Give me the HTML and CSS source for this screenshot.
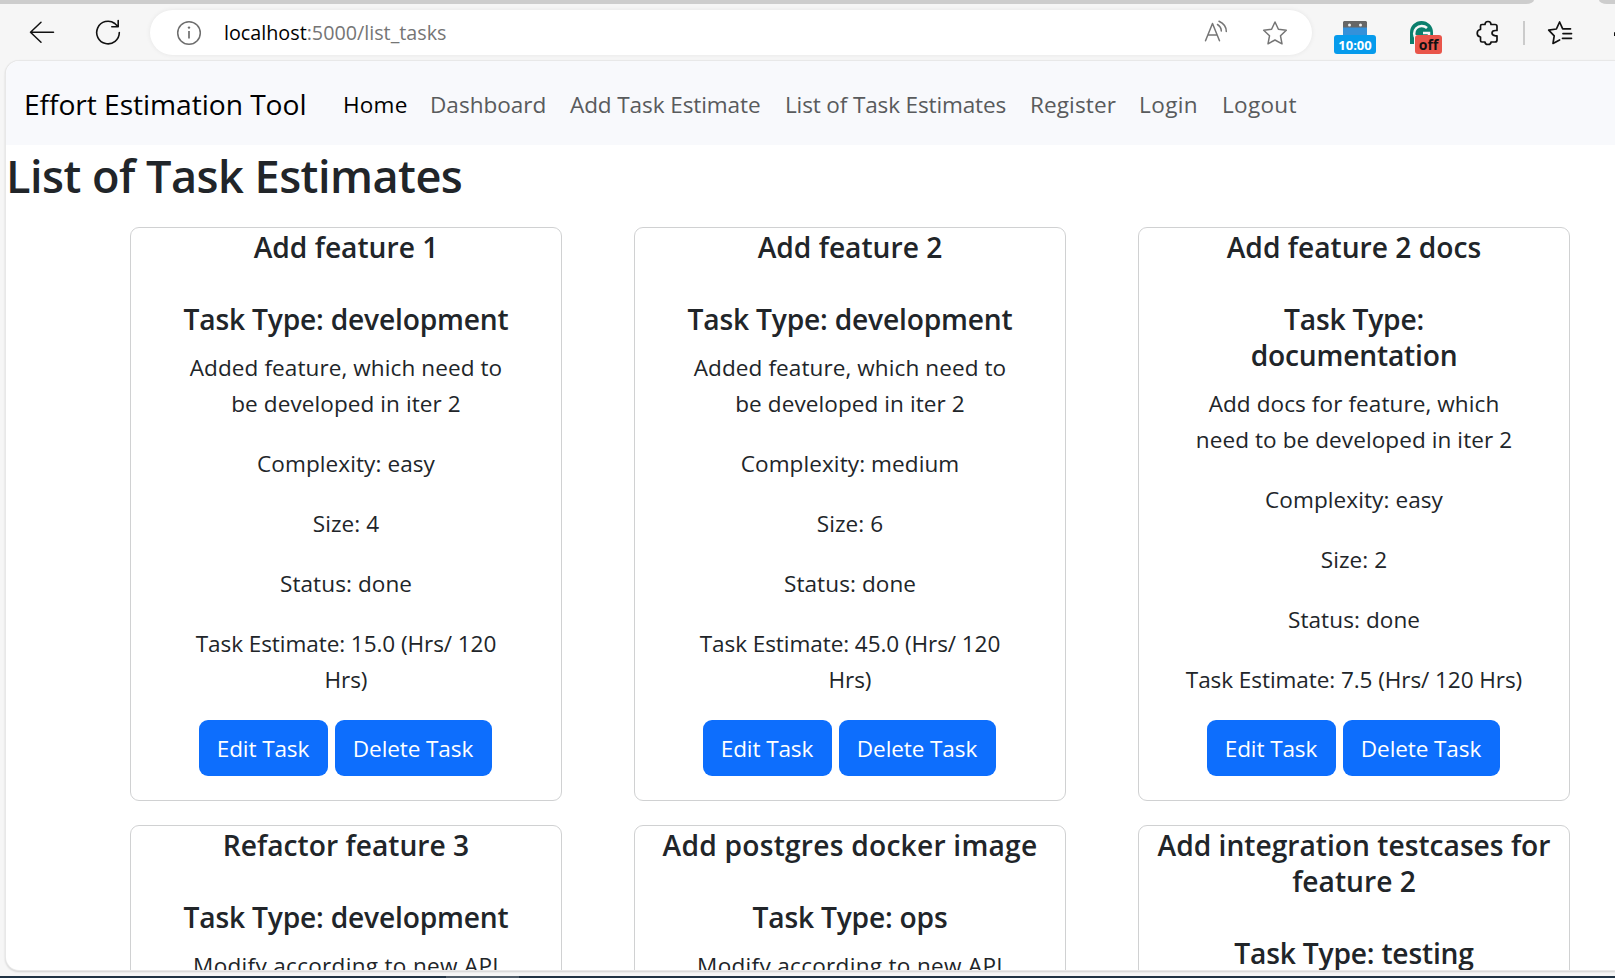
FILE: index.html
```
<!DOCTYPE html>
<html lang="en">
<head>
<meta charset="utf-8">
<title>Effort Estimation Tool</title>
<link rel="stylesheet" href="styles.css">
</head>
<body>
<div class="tabstrip"><div class="tabs-left"></div><div class="tabs-right"></div></div>
<header class="toolbar">
  <svg class="back" width="26" height="24" viewBox="0 0 26 24" fill="none" stroke="#111" stroke-width="1.5" stroke-linecap="round" stroke-linejoin="round"><path d="M24.5 12.3H1.5M12 2.3L1.5 12.3L12 22.3"/></svg>
  <svg class="reload" width="26" height="26" viewBox="0 0 26 26" fill="none" stroke="#111" stroke-width="1.6" stroke-linecap="round" stroke-linejoin="round"><path d="M24.300 13.500A11.300 11.300 0 1 1 19.800 4.500L23 7.600M23.200 1.500V7.800H16.800"/></svg>
  <div class="address">
    <svg class="info" width="26" height="26" viewBox="0 0 26 26" fill="none" stroke="#6e6e6e" stroke-width="1.5"><circle cx="13" cy="13" r="11.3"/><path d="M13 11v7.5" stroke-width="1.7"/><circle cx="13" cy="7.6" r="1.2" fill="#6e6e6e" stroke="none"/></svg>
    <span class="url"><b>localhost</b>:5000/list_tasks</span>
    <svg class="read" width="24" height="24" viewBox="0 0 24 24" fill="none" stroke="#757575" stroke-width="1.5" stroke-linecap="round" stroke-linejoin="round"><path d="M1.5 20.8L8.5 3.5L15.5 20.8M4 15H13.2M13.5 4.5Q17.3 7 17.3 11M15 1.2Q22.3 4.5 22.3 11.5"/></svg>
    <svg class="fav" width="26" height="26" viewBox="0 0 26 26" fill="none" stroke="#757575" stroke-width="1.5" stroke-linejoin="round"><path d="M13 2L16.4 9.2L24.3 10.2L18.5 15.8L20 23.8L13 20L6 23.8L7.500 15.8L1.700 10.2L9.600 9.200Z"/></svg>
  </div>
  <div class="ext timer">
    <svg width="24" height="15" viewBox="0 0 24 15"><path fill="#666" d="M1 0H23L24 1V7H0V1Z"/><path fill="#3491da" d="M0 6.500H24V15H0Z"/><circle cx="6.500" cy="4" r="1.500" fill="#eee"/><circle cx="17.500" cy="4" r="1.500" fill="#eee"/></svg>
    <span class="badge blue">10:00</span>
  </div>
  <div class="ext grammar">
    <svg width="24" height="24" viewBox="0 0 24 24" fill="none"><path fill="#0b7f6d" d="M0 23V11.500A11.500 11.500 0 0 1 23 11.500V14H4V23Z"/><path d="M6.500 18A7 7 0 0 1 17 7" stroke="#f7f7f7" stroke-width="2.500"/><path d="M13 12H19V17" stroke="#f7f7f7" stroke-width="2.500"/></svg>
    <span class="badge red">off</span>
  </div>
  <svg class="puzzle" width="24" height="26" viewBox="0 0 24 26" fill="none" stroke="#111" stroke-width="1.700" stroke-linejoin="round"><path d="M6 4.500H9Q9 1.500 12 1.500T15 4.500H19Q21 4.500 21 6.500V10.500H19.500Q16 10.500 16 13T19.500 15.800H21V20Q21 22 19 22H15Q15 24.500 12 24.500T9 22H6Q4.500 22 4.500 20.500V17Q1.200 16.500 1.200 13.200T4.500 9.500V6Q4.500 4.500 6 4.500Z"/></svg>
  <div class="divider"></div>
  <svg class="favs" width="26" height="26" viewBox="0 0 26 26" fill="none" stroke="#111" stroke-width="1.700" stroke-linecap="round" stroke-linejoin="round"><path d="M23.500 8.800H15.700L12.600 2L9.400 9L1.700 10.200L7.200 15.800L6 23.500L12.600 20M16 13.600H24.500M15.500 18.300H24.500"/></svg>
  <div class="clip"></div>
</header>
<main class="page">
  <nav class="navbar">
    <a class="brand">Effort Estimation Tool</a>
    <a class="link home active">Home</a>
    <a class="link dash">Dashboard</a>
    <a class="link add">Add Task Estimate</a>
    <a class="link list">List of Task Estimates</a>
    <a class="link register">Register</a>
    <a class="link login">Login</a>
    <a class="link logout">Logout</a>
  </nav>
  <h1>List of Task Estimates</h1>
  <div class="grid">
    <article class="card">
      <h4>Add feature 1</h4>
      <div class="body">
        <h4 class="type">Task Type: development</h4>
        <p>Added feature, which need to<br>be developed in iter 2</p>
        <p>Complexity: easy</p>
        <p>Size: 4</p>
        <p>Status: done</p>
        <p class="estimate">Task Estimate: 15.0 (Hrs/ 120<br>Hrs)</p>
        <div class="actions"><a class="btn edit">Edit Task</a><a class="btn delete">Delete Task</a></div>
      </div>
    </article>
    <article class="card">
      <h4>Add feature 2</h4>
      <div class="body">
        <h4 class="type">Task Type: development</h4>
        <p>Added feature, which need to<br>be developed in iter 2</p>
        <p>Complexity: medium</p>
        <p>Size: 6</p>
        <p>Status: done</p>
        <p class="estimate">Task Estimate: 45.0 (Hrs/ 120<br>Hrs)</p>
        <div class="actions"><a class="btn edit">Edit Task</a><a class="btn delete">Delete Task</a></div>
      </div>
    </article>
    <article class="card">
      <h4>Add feature 2 docs</h4>
      <div class="body">
        <h4 class="type">Task Type:<br>documentation</h4>
        <p>Add docs for feature, which<br>need to be developed in iter 2</p>
        <p>Complexity: easy</p>
        <p>Size: 2</p>
        <p>Status: done</p>
        <p class="estimate">Task Estimate: 7.5 (Hrs/ 120 Hrs)</p>
        <div class="actions"><a class="btn edit">Edit Task</a><a class="btn delete">Delete Task</a></div>
      </div>
    </article>
    <article class="card">
      <h4>Refactor feature 3</h4>
      <div class="body">
        <h4 class="type">Task Type: development</h4>
        <p class="wide">Modify according to new API</p>
      </div>
    </article>
    <article class="card">
      <h4 class="roomy">Add postgres docker image</h4>
      <div class="body">
        <h4 class="type">Task Type: ops</h4>
        <p class="wide">Modify according to new API</p>
      </div>
    </article>
    <article class="card">
      <h4>Add integration testcases for<br>feature 2</h4>
      <div class="body">
        <h4 class="type">Task Type: testing</h4>
      </div>
    </article>
  </div>
</main>
<div class="taskbar"><div class="task"></div></div>
</body>
</html>
```
FILE: styles.css
```
* { box-sizing: border-box; }
body {
  margin: 0;
  width: 1615px;
  height: 978px;
  overflow: hidden;
  background: #f6f6f6;
  color: #212529;
  font: 22.56px/36px "Open Sans", "Noto Sans", sans-serif;
  display: flex;
  flex-direction: column;
}
svg { display: block; flex: none; }

.tabstrip { height: 4px; flex: none; display: flex; justify-content: space-between; }
.tabs-left { width: 1534px; background: #cdcdcd; border-bottom-right-radius: 8px 4px; }
.tabs-right { width: 16px; background: #cdcdcd; border-bottom-left-radius: 8px 4px; }

.toolbar { height: 57px; flex: none; display: flex; align-items: flex-start; padding: 6px 0 0 29px; }
.back { margin: 10px 0 0; }
.reload { margin: 9px 0 0 40px; }
.address {
  width: 1162px; height: 45px; margin-left: 29px; padding-left: 26px;
  display: flex; align-items: center; flex: none;
  background: #fff; border-radius: 23px; box-shadow: 0 0 5px rgba(0, 0, 0, .07);
}
.url { margin-left: 22px; width: 239px; font-size: 19.74px; color: #757575; white-space: nowrap; }
.url b { font-weight: 400; color: #000; }
.read { margin: -2px 0 0 741px; }
.fav { margin-left: 34px; }

.ext { position: relative; flex: none; }
.timer { margin: 11px 0 0 31px; width: 24px; height: 34px; }
.grammar { margin: 11px 0 0 43px; width: 24px; height: 34px; }
.badge {
  position: absolute; top: 14px; height: 19px; border-radius: 3px;
  font: 700 13px/20px "Open Sans", sans-serif; text-align: center;
}
.blue { left: -9px; width: 42px; background: #069bec; color: #fff; }
.red { left: 5px; width: 27px; background: #e9554a; color: #111; font-size: 14px; }
.puzzle { margin: 10px 0 0 42px; }
.divider { margin: 11px 0 0 23px; width: 2px; height: 24px; background: #cbcbcb; }
.favs { margin: 10px 0 0 22px; }
.clip { margin: 22px 0 0 41px; width: 2px; height: 4px; background: #111; border-radius: 2px 0 0 0; }

.page {
  height: 909px; flex: none; margin-left: 6px; overflow: hidden;
  background: #fff; border-radius: 13px 0 0 13px;
  box-shadow: 0 0 0 1px #e8e8e8, 0 1px 2px 1px rgba(0, 0, 0, .15);
}
.navbar {
  height: 84px; display: flex; align-items: center; padding: 3px 0 0 18px;
  background: #f8f9fc; white-space: nowrap;
}
.brand { width: 307px; font-size: 28.2px; line-height: 45px; color: #000; letter-spacing: -.06px; }
.link { padding-left: 12px; color: #595b5d; flex: none; }
.home { width: 87px; letter-spacing: .2px; }
.dash { width: 140px; }
.add { width: 215px; letter-spacing: -.1px; }
.list { width: 245px; letter-spacing: -.15px; }
.register { width: 109px; letter-spacing: .1px; }
.login { width: 83px; letter-spacing: .4px; }
.logout { letter-spacing: .3px; }
.link.active { color: #000; }

h1 { margin: 0; padding: 2px 0 0; font-size: 45.1px; line-height: 57px; font-weight: 600; letter-spacing: -.52px; }
.grid { margin: 23px 0 0 124px; display: grid; grid-template-columns: repeat(3, 432px); gap: 24px 72px; }
.card { border: 1px solid #d0d1d2; border-radius: 9px; text-align: center; white-space: nowrap; padding-top: 1px; }
.card h4 { margin: 0 0 12px; font-size: 28.2px; line-height: 36px; font-weight: 600; }
.card .type { margin-bottom: 13px; letter-spacing: -.2px; }
.card .roomy { letter-spacing: .22px; }
.body { padding: 24px 24px; }
.card p { margin: 0 0 24px; letter-spacing: .08px; }
.card .estimate { letter-spacing: -.08px; }
.card .wide { letter-spacing: .3px; }
.body .actions { display: flex; justify-content: center; gap: 7px; margin: -2px 2px 0 0; }
.btn { height: 56px; padding-top: 11px; border-radius: 9px; background: #0d6efd; color: #fff; letter-spacing: -.1px; }
.edit { width: 129px; }
.delete { width: 157px; }

.taskbar { margin-top: 6px; height: 2px; flex: none; background: #203344; padding-left: 446px; }
.task { width: 73px; height: 2px; background: #4f5c68; }
```
